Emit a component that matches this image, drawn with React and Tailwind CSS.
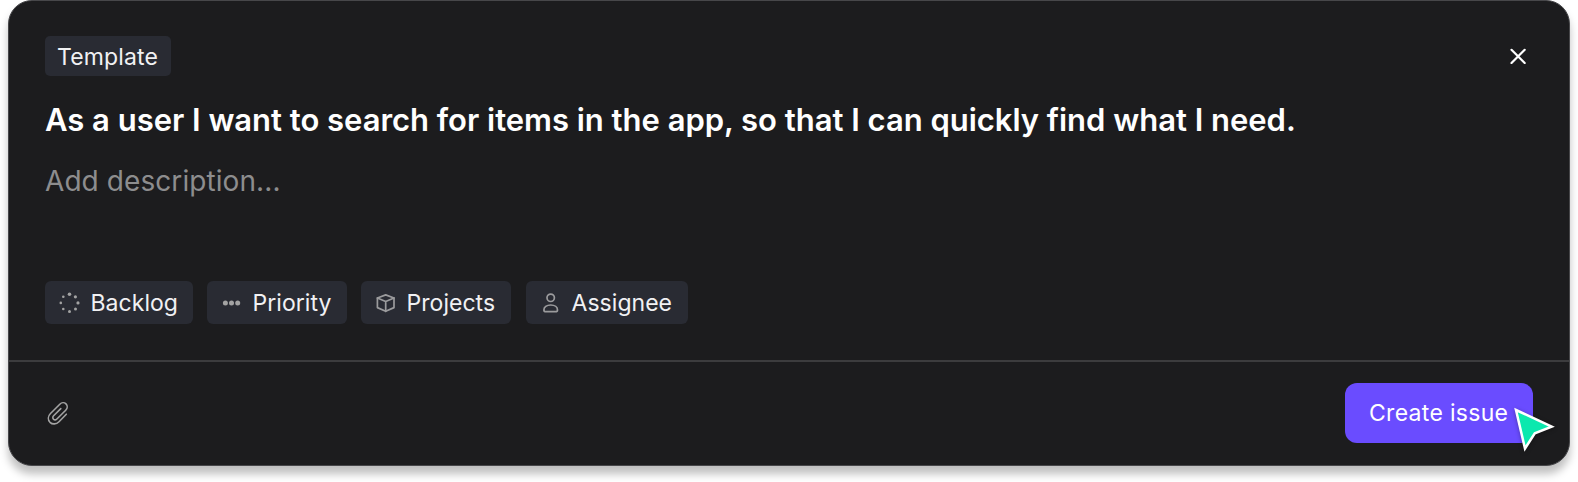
import React from "react";

function Chip({ className, icon, children }) {
  return (
    <div className={`flex h-[43px] items-center rounded-md bg-[#292b33] pl-[15px] ${className}`}>
      {icon}
      <span className="whitespace-nowrap pt-px text-[23px] leading-7 tracking-[0.040px] text-[#f1f1f3]">{children}</span>
    </div>
  );
}

function BacklogIcon() {
  return (
    <svg className="mr-[10.500px] h-5 w-5 shrink-0 overflow-visible" viewBox="0 0 20 20" fill="#a3a3a3">
      <circle cx="9.5" cy="1.200" r="1.8" />
      <circle cx="15.4" cy="3.8" r="1.6" />
      <circle cx="18" cy="9.9" r="1.600" />
      <circle cx="15.500" cy="16" r="1.500" />
      <circle cx="9.500" cy="18.600" r="1.500" />
      <circle cx="3.300" cy="16" r="1.300" />
      <circle cx="0.800" cy="9.900" r="1.300" />
      <circle cx="3.300" cy="3.800" r="1.300" />
    </svg>
  );
}

function PriorityIcon() {
  return (
    <svg className="mr-[10.500px] h-5 w-5 shrink-0" viewBox="0 0 20 20" fill="#a3a3a3">
      <circle cx="3.400" cy="10" r="2.500" />
      <circle cx="9.500" cy="10" r="2.500" />
      <circle cx="15.700" cy="10" r="2.500" />
    </svg>
  );
}

function ProjectsIcon() {
  return (
    <svg className="mr-[10.500px] h-5 w-5 shrink-0" viewBox="0 0 20 20" fill="none" stroke="#9b9b9d" strokeWidth="1.700" strokeLinejoin="round" strokeLinecap="round">
      <path d="M9.700 1.900 18 5v9.600l-8.300 3.700-8.300-3.700V5Z" />
      <path d="m1.400 5 8.300 3.500L18 5M9.700 8.500v9.800" />
    </svg>
  );
}

function AssigneeIcon() {
  return (
    <svg className="mr-[10.500px] h-5 w-5 shrink-0" viewBox="0 0 20 20" fill="none" stroke="#9b9b9d" strokeWidth="1.700">
      <circle cx="9.700" cy="4.800" r="3.700" />
      <path d="M5 18.700h9.400c1.300 0 2.100-.7 2.100-1.800 0-2.800-2.700-4.900-6.800-4.900s-6.800 2.100-6.800 4.900c0 1.100.8 1.800 2.100 1.800Z" />
    </svg>
  );
}

export default function App() {
  return (
    <div className="h-[482px] w-full overflow-hidden bg-white px-2 font-['Inter',sans-serif] antialiased">
      <section className="flex h-[466px] flex-col rounded-[24px] border border-[#47474a] bg-[#1c1c1e] shadow-[0_8px_8px_rgba(0,0,0,0.25)]">
        <div className="flex h-[359px] shrink-0 flex-col px-9 pt-[35px]">
          <header className="flex h-10 items-center justify-between">
            <div className="flex h-10 w-[126px] items-center rounded-[5px] bg-[#292b33] pl-[12px]">
              <span className="pt-px text-[23px] leading-7 tracking-[0.140px] text-[#f1f1f3]">Template</span>
            </div>
            <button aria-label="Close" className="mr-[7px]">
              <svg className="h-4 w-4" viewBox="0 0 16 16" stroke="#fff" strokeWidth="2.200" strokeLinecap="round">
                <path d="m1.500 1.800 13.200 13.200M14.700 1.800 1.500 15" />
              </svg>
            </button>
          </header>
          <h1 className="mt-6 whitespace-nowrap text-[31px] font-semibold leading-10 tracking-[-0.020px] text-white">
            As a user I want to search for items in the app, so that I can quickly find what I need.
          </h1>
          <p className="mt-[21px] text-[28px] leading-10 tracking-[0.080px] text-[#8d8d8e]">Add description...</p>
          <div className="mt-[80px] flex">
            <Chip className="mr-[14px] w-[148px]" icon={<BacklogIcon />}>Backlog</Chip>
            <Chip className="mr-[14px] w-[140px]" icon={<PriorityIcon />}>Priority</Chip>
            <Chip className="mr-[15px] w-[150px]" icon={<ProjectsIcon />}>Projects</Chip>
            <Chip className="w-[162px]" icon={<AssigneeIcon />}>Assignee</Chip>
          </div>
        </div>
        <footer className="flex flex-1 items-center justify-between border-t-2 border-[#3c3c3e] px-9 pb-px">
          <svg className="ml-[2px] h-6 w-[22px]" viewBox="0 0 22 24" fill="none" stroke="#a3a3a3" strokeWidth="1.600" strokeLinecap="round">
            <path d="M19.300 13.200 12 20.700c-2.800 2.800-6.600 2.900-9 .6-2.300-2.400-2.200-6.100.5-8.800l9.300-9.300c1.900-1.900 4.500-2 6.200-.3 1.700 1.700 1.600 4.400-.3 6.300l-8.800 8.800c-1 1-2.500 1.100-3.400.2-.9-.9-.9-2.400.1-3.400l7.200-7.200" />
          </svg>
          <div className="relative">
            <button className="flex h-[60px] w-[188px] items-center rounded-xl bg-[#6a4cff] pl-[24px]">
              <span className="whitespace-nowrap text-[23px] leading-7 tracking-[0.300px] text-white">Create issue</span>
            </button>
            <svg className="absolute left-[168px] top-[24px] h-[48px] w-[44px] drop-shadow-[0_1px_2px_rgba(0,0,0,0.3)]" viewBox="0 0 44 48">
              <path d="M3 3 38.700 19.700 21.800 26.300 12 41.500Z" fill="#0be8ae" stroke="#fff" strokeWidth="2.500" />
            </svg>
          </div>
        </footer>
      </section>
    </div>
  );
}
